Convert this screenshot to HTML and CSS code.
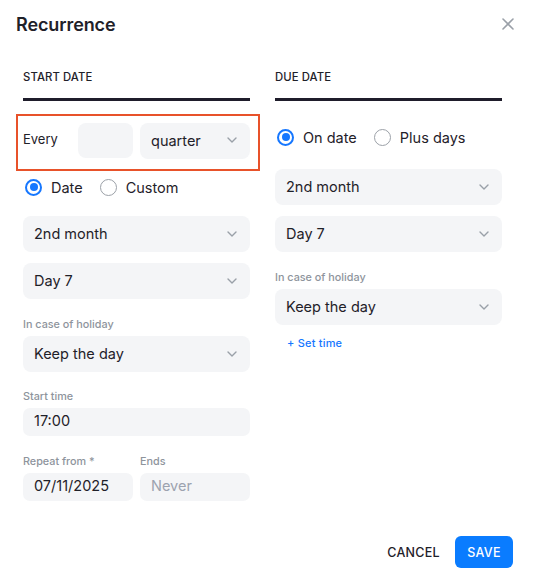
FILE: index.html
```html
<!DOCTYPE html>
<html lang="en">
<head>
<meta charset="utf-8">
<title>Recurrence</title>
<link rel="stylesheet" href="styles.css">
</head>
<body>
<div class="dialog">
  <header class="dialog-header">
    <h1 class="title">Recurrence</h1>
    <button class="close" aria-label="Close">
      <svg width="12" height="12" viewBox="0 0 12 12"><path d="M1 1L11 11M11 1L1 11" stroke="#9aa0a8" stroke-width="1.6" stroke-linecap="round"/></svg>
    </button>
  </header>

  <div class="columns">
    <section class="col">
      <div class="tab">START DATE</div>

      <div class="every-row">
        <span class="every-label">Every</span>
        <div class="field num"></div>
        <div class="select sel-quarter"><span>quarter</span><svg class="chev" width="10" height="6" viewBox="0 0 10 6"><path d="M1 1L5 5L9 1" fill="none" stroke="#9aa0a8" stroke-width="1.4" stroke-linecap="round" stroke-linejoin="round"/></svg></div>
        <div class="highlight"></div>
      </div>

      <div class="radios radios-left">
        <label class="radio"><span class="dot on"></span>Date</label>
        <label class="radio"><span class="dot"></span>Custom</label>
      </div>

      <div class="select mt19"><span>2nd month</span><svg class="chev" width="10" height="6" viewBox="0 0 10 6"><path d="M1 1L5 5L9 1" fill="none" stroke="#9aa0a8" stroke-width="1.4" stroke-linecap="round" stroke-linejoin="round"/></svg></div>
      <div class="select mt11"><span>Day 7</span><svg class="chev" width="10" height="6" viewBox="0 0 10 6"><path d="M1 1L5 5L9 1" fill="none" stroke="#9aa0a8" stroke-width="1.4" stroke-linecap="round" stroke-linejoin="round"/></svg></div>

      <div class="label mt20">In case of holiday</div>
      <div class="select mt5"><span>Keep the day</span><svg class="chev" width="10" height="6" viewBox="0 0 10 6"><path d="M1 1L5 5L9 1" fill="none" stroke="#9aa0a8" stroke-width="1.4" stroke-linecap="round" stroke-linejoin="round"/></svg></div>

      <div class="label mt19">Start time</div>
      <div class="input mt5">17:00</div>

      <div class="pair mt20">
        <div class="pair-item">
          <div class="label">Repeat from *</div>
          <div class="input mt5">07/11/2025</div>
        </div>
        <div class="pair-item">
          <div class="label">Ends</div>
          <div class="input mt5 placeholder">Never</div>
        </div>
      </div>
    </section>

    <section class="col">
      <div class="tab">DUE DATE</div>

      <div class="radios radios-right">
        <label class="radio"><span class="dot on"></span>On date</label>
        <label class="radio"><span class="dot"></span>Plus days</label>
      </div>

      <div class="select mt22"><span>2nd month</span><svg class="chev" width="10" height="6" viewBox="0 0 10 6"><path d="M1 1L5 5L9 1" fill="none" stroke="#9aa0a8" stroke-width="1.4" stroke-linecap="round" stroke-linejoin="round"/></svg></div>
      <div class="select mt11"><span>Day 7</span><svg class="chev" width="10" height="6" viewBox="0 0 10 6"><path d="M1 1L5 5L9 1" fill="none" stroke="#9aa0a8" stroke-width="1.4" stroke-linecap="round" stroke-linejoin="round"/></svg></div>

      <div class="label mt20">In case of holiday</div>
      <div class="select mt5"><span>Keep the day</span><svg class="chev" width="10" height="6" viewBox="0 0 10 6"><path d="M1 1L5 5L9 1" fill="none" stroke="#9aa0a8" stroke-width="1.4" stroke-linecap="round" stroke-linejoin="round"/></svg></div>

      <div class="set-time">+ Set time</div>
    </section>
  </div>

  <footer class="dialog-footer">
    <button class="btn-text">CANCEL</button>
    <button class="btn-primary">SAVE</button>
  </footer>
</div>
</body>
</html>
```

FILE: styles.css
```css
* { box-sizing: border-box; }
html, body { margin: 0; padding: 0; background: #fff; }
body {
  font-family: Inter, "Noto Sans", "Liberation Sans", sans-serif;
  color: #1f2129;
}
.dialog {
  width: 533px;
  height: 578px;
  display: flex;
  flex-direction: column;
}
.dialog-header {
  display: flex;
  justify-content: space-between;
  align-items: center;
  padding: 13px 19px 0 16px;
  height: 37px;
}
.title {
  margin: 0;
  font-size: 18px;
  font-weight: 600;
  line-height: 24px;
  color: #1f2129;
  letter-spacing: -0.1px;
}
.close {
  border: 0;
  background: none;
  padding: 0;
  width: 12px;
  height: 12px;
  display: flex;
  margin-top: -2px;
}
.columns {
  display: flex;
  gap: 25px;
  padding: 32px 0 0 23px;
}
.col {
  width: 227px;
  display: flex;
  flex-direction: column;
}
.tab {
  font-size: 11.3px;
  font-weight: 500;
  line-height: 16px;
  letter-spacing: 0.1px;
  color: #1f2129;
  padding-bottom: 13px;
  border-bottom: 3px solid #1f1d2b;
}
.every-row {
  position: relative;
  display: flex;
  align-items: center;
  margin-top: 22px;
  height: 35px;
}
.every-label {
  width: 55px;
  font-size: 13px;
  color: #1f2129;
  margin-top: -3px;
}
.field.num {
  width: 55px;
  height: 35px;
  background: #f4f5f7;
  border-radius: 8px;
  margin-right: 7px;
}
.sel-quarter {
  width: 110px;
  height: 35px;
}
.highlight {
  position: absolute;
  left: -7px;
  top: -9px;
  width: 244px;
  height: 57px;
  border: 2px solid #e8522a;
  pointer-events: none;
}
.select {
  display: flex;
  align-items: center;
  justify-content: space-between;
  height: 36px;
  background: #f4f5f7;
  border-radius: 8px;
  padding: 0 13px 1px 11px;
  font-size: 14.5px;
  color: #1f2129;
}
.chev { flex: none; }
.radios {
  display: flex;
  align-items: center;
  height: 20px;
  font-size: 14.5px;
}
.radios-left { margin-top: 19px; }
.radios-right { margin-top: 26px; }
.radio {
  display: flex;
  align-items: center;
  margin-left: 2px;
  margin-right: 15px;
}
.radio .dot {
  width: 17px;
  height: 17px;
  border-radius: 50%;
  border: 1.6px solid #9ca1a8;
  margin-right: 9px;
  position: relative;
  flex: none;
}
.radio .dot.on {
  border: 2px solid #1677ff;
}
.radio .dot.on::after {
  content: "";
  position: absolute;
  left: 2.5px;
  top: 2.5px;
  width: 8px;
  height: 8px;
  border-radius: 50%;
  background: #1677ff;
}
.label {
  font-size: 10.8px;
  font-weight: 500;
  line-height: 12px;
  color: #8e949c;
}
.input {
  height: 28px;
  background: #f4f5f7;
  border-radius: 7px;
  padding: 0 11px 3px;
  display: flex;
  align-items: center;
  font-size: 14.5px;
  color: #1f2129;
}
.input.placeholder { color: #9ca3af; }
.pair {
  display: flex;
  gap: 7px;
}
.pair-item {
  width: 110px;
  display: flex;
  flex-direction: column;
}
.set-time {
  margin-top: 11px;
  padding-left: 12px;
  font-size: 11px;
  font-weight: 500;
  line-height: 14px;
  color: #1677ff;
  letter-spacing: 0.2px;
}
.mt5 { margin-top: 5px; }
.mt11 { margin-top: 11px; }
.mt19 { margin-top: 19px; }
.mt20 { margin-top: 20px; }
.mt22 { margin-top: 22px; }
.dialog-footer {
  margin-top: auto;
  display: flex;
  justify-content: flex-end;
  align-items: center;
  gap: 7px;
  padding: 0 20px 10px 0;
}
.btn-text {
  border: 0;
  background: none;
  font-family: inherit;
  font-size: 12.5px;
  font-weight: 500;
  letter-spacing: 0.3px;
  color: #1f2129;
  padding: 8px 8px;
}
.btn-primary {
  border: 0;
  background: #0a7cff;
  color: #fff;
  font-family: inherit;
  font-size: 12.5px;
  font-weight: 500;
  letter-spacing: 0.3px;
  height: 32px;
  width: 58px;
  border-radius: 6px;
  padding: 0;
}
```
